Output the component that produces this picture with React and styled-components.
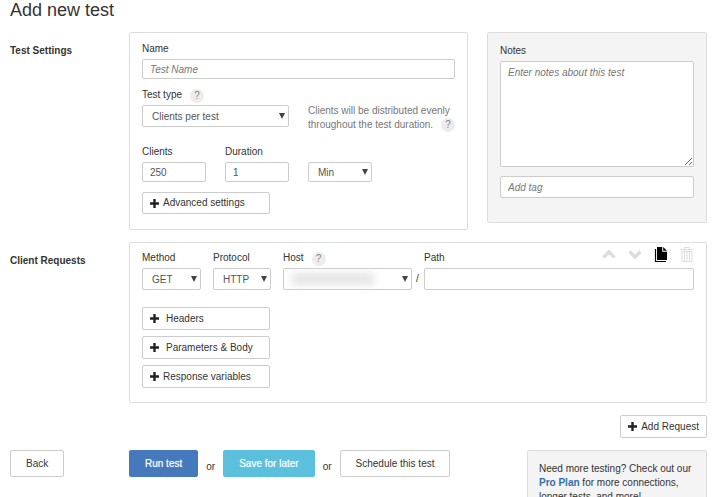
import React from "react";
import styled, { createGlobalStyle, css } from "styled-components";

const settings = {
  colors: {
    text: "#333",
    muted: "#777",
    border: "#ccc",
    panelBorder: "#ddd",
    shaded: "#f4f4f4",
    primary: "#4678bc",
    info: "#5bc0de",
    link: "#2f6fae"
  },
  space: 12
};

const GlobalStyle = createGlobalStyle`
  * {
    box-sizing: border-box;
  }

  body {
    background: #fff;
    color: ${settings.colors.text};
    font-family: "Liberation Sans", Arial, sans-serif;
    font-size: 10px;
    line-height: 14px;
    margin: 0;
  }

  button, input, select, textarea {
    font-family: inherit;
    font-size: inherit;
    margin: 0;
  }
`;

const Page = styled.main`
  padding: 0 13px 0 10px;
`;

const Title = styled.h1`
  font-size: 18px;
  font-weight: 400;
  line-height: 20px;
  margin: 0 0 ${settings.space}px;
`;

const Section = styled.section`
  align-items: start;
  display: grid;
  grid-template-columns: 119px minmax(0, 1fr);
  margin-bottom: ${settings.space}px;
`;

const SectionTitle = styled.h2`
  font-size: 10px;
  font-weight: 700;
  line-height: 14px;
  margin: 0;
  padding-top: ${settings.space}px;
`;

const SettingsColumns = styled.div`
  align-items: start;
  display: grid;
  gap: 19px;
  grid-template-columns: minmax(0, 1fr) 220px;
`;

const Panel = styled.div`
  background: ${props => (props.$shaded ? settings.colors.shaded : "#fff")};
  border: 1px solid ${settings.colors.panelBorder};
  border-radius: 2px;
  padding: ${props => props.$top}px ${settings.space}px
    ${props => props.$bottom}px;
`;

const Stack = styled.div`
  display: flex;
  flex-direction: column;
  gap: ${props => props.$gap}px;
`;

const Field = styled.div`
  display: flex;
  flex-direction: column;
  gap: 4px;
  min-width: 0;
`;

const FieldHeader = styled.div`
  align-items: flex-end;
  display: flex;
  gap: 8px;
  height: ${props => (props.$tall ? 18 : 12)}px;
`;

const Label = styled.label`
  line-height: 12px;
`;

const Help = styled.button`
  background: #ececec;
  border: none;
  border-radius: 50%;
  color: #888;
  cursor: pointer;
  flex: none;
  height: 14px;
  line-height: 14px;
  margin-bottom: -2px;
  padding: 0;
  width: 14px;
`;

const control = css`
  background: #fff;
  border: 1px solid ${settings.colors.border};
  border-radius: 2px;
  color: #555;
  display: block;
  width: 100%;

  &::placeholder {
    color: ${settings.colors.muted};
    font-style: italic;
    opacity: 1;
  }
`;

const Input = styled.input`
  ${control}
  height: ${props => (props.$tall ? 22 : 20)}px;
  padding: 0 7px;
`;

const TextArea = styled.textarea`
  ${control}
  height: 106px;
  line-height: 14px;
  padding: 4px 7px;
`;

const SelectWrapper = styled.div`
  position: relative;

  &::after {
    border: 3px solid transparent;
    border-bottom: none;
    border-top: 6px solid #444;
    content: "";
    pointer-events: none;
    position: absolute;
    right: 4px;
    top: calc(50% - 3px);
  }
`;

const SelectControl = styled.select`
  ${control}
  appearance: none;
  height: ${props => (props.$short ? 20 : 22)}px;
  padding: 0 12px 0 9px;
`;

const HiddenHost = styled.span`
  background: #e4e4e4;
  filter: blur(4px);
  height: 12px;
  left: 9px;
  pointer-events: none;
  position: absolute;
  right: 38px;
  top: 5px;
`;

const ClientsRow = styled.div`
  align-items: end;
  display: grid;
  gap: 0 19px;
  grid-template-columns: 64px 64px 64px;
  margin: 19px 0 10px;
`;

const TypeRow = styled.div`
  align-items: end;
  display: grid;
  gap: 19px;
  grid-template-columns: 147px minmax(0, 1fr);
`;

const Hint = styled.p`
  color: ${settings.colors.muted};
  margin: 0 0 -5px;
`;

const HintLastLine = styled.span`
  display: flex;
  gap: 8px;
  white-space: nowrap;

  ${Help} {
    margin: 0;
  }
`;

const Button = styled.button`
  background: #fff;
  border: 1px solid ${settings.colors.border};
  border-radius: 2px;
  color: ${settings.colors.text};
  cursor: pointer;
  height: 27px;
  line-height: 14px;
  padding: 0 15px;
  white-space: nowrap;
`;

const PrimaryButton = styled(Button)`
  background: ${settings.colors.primary};
  border-color: ${settings.colors.primary};
  color: #fff;
  text-shadow: 0 0 1px rgba(255, 255, 255, 0.6);
`;

const InfoButton = styled(PrimaryButton)`
  background: ${settings.colors.info};
  border-color: ${settings.colors.info};
`;

const AddButton = styled(Button)`
  align-items: center;
  display: flex;
  gap: ${props => (props.$spaced ? 7 : 4)}px;
  height: ${props => (props.$short ? 22 : 23)}px;
  padding: 0 7px;
`;

const ExpandButton = styled(AddButton)`
  width: 128px;
`;

const RequestRow = styled.div`
  align-items: end;
  display: grid;
  gap: ${settings.space}px;
  grid-template-columns: 59px 58px 129px minmax(0, 1fr);
`;

const PathField = styled.div`
  align-items: end;
  display: grid;
  gap: 4px;
  grid-template-columns: 4px minmax(0, 1fr);
  margin-left: -8px;
`;

const Slash = styled.span`
  line-height: 22px;
`;

const Tools = styled.div`
  align-self: flex-start;
  display: flex;
  gap: ${settings.space}px;
  margin-left: auto;
`;

const ToolButton = styled.button`
  background: none;
  border: none;
  color: ${props => (props.$dark ? "#000" : "#ddd")};
  cursor: pointer;
  height: 18px;
  padding: 0;
  width: 14px;

  svg {
    display: block;
  }
`;

const AddRequestRow = styled.div`
  display: flex;
  justify-content: flex-end;
  margin-bottom: ${settings.space}px;
`;

const Footer = styled.footer`
  align-items: start;
  display: grid;
  grid-template-columns: 119px minmax(0, 1fr) 180px;
`;

const Actions = styled.div`
  align-items: center;
  display: flex;
  gap: 8px;
`;

const Or = styled.span`
  padding-top: 6px;
`;

const Promo = styled.aside`
  background: ${settings.colors.shaded};
  border: 1px solid ${settings.colors.panelBorder};
  border-radius: 2px;
  padding: 11px;
`;

const ProLink = styled.a`
  color: ${settings.colors.link};
  font-weight: 700;
  text-decoration: none;
`;

const PlusIcon = () => (
  <svg width="9" height="9" viewBox="0 0 9 9" aria-hidden="true">
    <path d="M3.3 0h2.4v3.3H9v2.4H5.7V9H3.3V5.7H0V3.3h3.3z" fill="#222" />
  </svg>
);

const UpIcon = () => (
  <svg width="14" height="18" viewBox="0 0 14 18" aria-hidden="true">
    <path d="M1.5 11.5L7 6l5.5 5.5" fill="none" stroke="currentColor" strokeWidth="3.4" />
  </svg>
);

const DownIcon = () => (
  <svg width="14" height="18" viewBox="0 0 14 18" aria-hidden="true">
    <path d="M1.5 5.5L7 11l5.5-5.5" fill="none" stroke="currentColor" strokeWidth="3.4" />
  </svg>
);

const CopyIcon = () => (
  <svg width="14" height="18" viewBox="0 0 14 18" aria-hidden="true">
    <path d="M3 1h5.2v4.8H13V14H3z" fill="currentColor" />
    <path d="M9.2 1L13 4.8H9.2z" fill="currentColor" />
    <path d="M1.5 3v12.5H12" fill="none" stroke="currentColor" strokeWidth="1.2" />
  </svg>
);

const TrashIcon = () => (
  <svg width="14" height="18" viewBox="0 0 14 18" aria-hidden="true">
    <g fill="none" stroke="currentColor" strokeWidth="1">
      <path d="M0.5 3.5h13M4.5 3.5v-2h5v2M2 5.5h10v10.2H2z" />
      <path d="M4.5 5.5v10M7 5.5v10M9.5 5.5v10" />
    </g>
  </svg>
);

const Select = ({ children, ...props }) => (
  <SelectWrapper>
    <SelectControl {...props}>{children}</SelectControl>
  </SelectWrapper>
);

const requestSections = [
  { name: "Headers", spaced: true },
  { name: "Parameters & Body", spaced: true },
  { name: "Response variables", spaced: false }
];

const TestSettings = () => (
  <Section>
    <SectionTitle>Test Settings</SectionTitle>
    <SettingsColumns>
      <Panel $top={10} $bottom={15}>
        <Stack $gap={10}>
          <Field>
            <FieldHeader>
              <Label htmlFor="name">Name</Label>
            </FieldHeader>
            <Input id="name" placeholder="Test Name" />
          </Field>
          <TypeRow>
            <Field>
              <FieldHeader>
                <Label htmlFor="type">Test type</Label>
                <Help type="button" aria-label="About test types">?</Help>
              </FieldHeader>
              <Select id="type">
                <option>Clients per test</option>
                <option>Clients per second</option>
              </Select>
            </Field>
            <Hint>
              Clients will be distributed evenly
              <HintLastLine>
                throughout the test duration.
                <Help type="button" aria-label="About distribution">?</Help>
              </HintLastLine>
            </Hint>
          </TypeRow>
        </Stack>
        <ClientsRow>
          <Field>
            <FieldHeader>
              <Label htmlFor="clients">Clients</Label>
            </FieldHeader>
            <Input id="clients" defaultValue="250" />
          </Field>
          <Field>
            <FieldHeader>
              <Label htmlFor="duration">Duration</Label>
            </FieldHeader>
            <Input id="duration" defaultValue="1" />
          </Field>
          <Select $short aria-label="Duration unit">
            <option>Min</option>
            <option>Sec</option>
          </Select>
        </ClientsRow>
        <ExpandButton type="button" $short>
          <PlusIcon />
          Advanced settings
        </ExpandButton>
      </Panel>
      <Panel $shaded $top={12} $bottom={24}>
        <Stack $gap={9}>
          <Field>
            <FieldHeader>
              <Label htmlFor="notes">Notes</Label>
            </FieldHeader>
            <TextArea id="notes" placeholder="Enter notes about this test" />
          </Field>
          <Input $tall aria-label="Add tag" placeholder="Add tag" />
        </Stack>
      </Panel>
    </SettingsColumns>
  </Section>
);

const ClientRequests = () => (
  <Section>
    <SectionTitle>Client Requests</SectionTitle>
    <Panel $top={3} $bottom={14}>
      <Stack $gap={17}>
        <RequestRow>
          <Field>
            <FieldHeader $tall>
              <Label htmlFor="method">Method</Label>
            </FieldHeader>
            <Select id="method">
              <option>GET</option>
              <option>POST</option>
            </Select>
          </Field>
          <Field>
            <FieldHeader $tall>
              <Label htmlFor="protocol">Protocol</Label>
            </FieldHeader>
            <Select id="protocol">
              <option>HTTP</option>
              <option>HTTPS</option>
            </Select>
          </Field>
          <Field>
            <FieldHeader $tall>
              <Label htmlFor="host">Host</Label>
              <Help type="button" aria-label="About hosts">?</Help>
            </FieldHeader>
            <SelectWrapper>
              <SelectControl id="host" />
              <HiddenHost />
            </SelectWrapper>
          </Field>
          <PathField>
            <Slash>/</Slash>
            <Field>
              <FieldHeader $tall>
                <Label htmlFor="path">Path</Label>
                <Tools>
                  <ToolButton type="button" aria-label="Move up">
                    <UpIcon />
                  </ToolButton>
                  <ToolButton type="button" aria-label="Move down">
                    <DownIcon />
                  </ToolButton>
                  <ToolButton type="button" aria-label="Duplicate" $dark>
                    <CopyIcon />
                  </ToolButton>
                  <ToolButton type="button" aria-label="Delete">
                    <TrashIcon />
                  </ToolButton>
                </Tools>
              </FieldHeader>
              <Input id="path" $tall />
            </Field>
          </PathField>
        </RequestRow>
        <Stack $gap={6}>
          {requestSections.map(section => (
            <ExpandButton key={section.name} type="button" $spaced={section.spaced}>
              <PlusIcon />
              {section.name}
            </ExpandButton>
          ))}
        </Stack>
      </Stack>
    </Panel>
  </Section>
);

const App = () => (
  <Page>
    <GlobalStyle />
    <Title>Add new test</Title>
    <TestSettings />
    <ClientRequests />
    <AddRequestRow>
      <AddButton type="button">
        <PlusIcon />
        Add Request
      </AddButton>
    </AddRequestRow>
    <Footer>
      <div>
        <Button type="button">Back</Button>
      </div>
      <Actions>
        <PrimaryButton type="button">Run test</PrimaryButton>
        <Or>or</Or>
        <InfoButton type="button">Save for later</InfoButton>
        <Or>or</Or>
        <Button type="button">Schedule this test</Button>
      </Actions>
      <Promo>
        Need more testing? Check out our <ProLink href="#pro">Pro Plan</ProLink>{" "}
        for more connections, longer tests, and more!
      </Promo>
    </Footer>
  </Page>
);

export default App;
